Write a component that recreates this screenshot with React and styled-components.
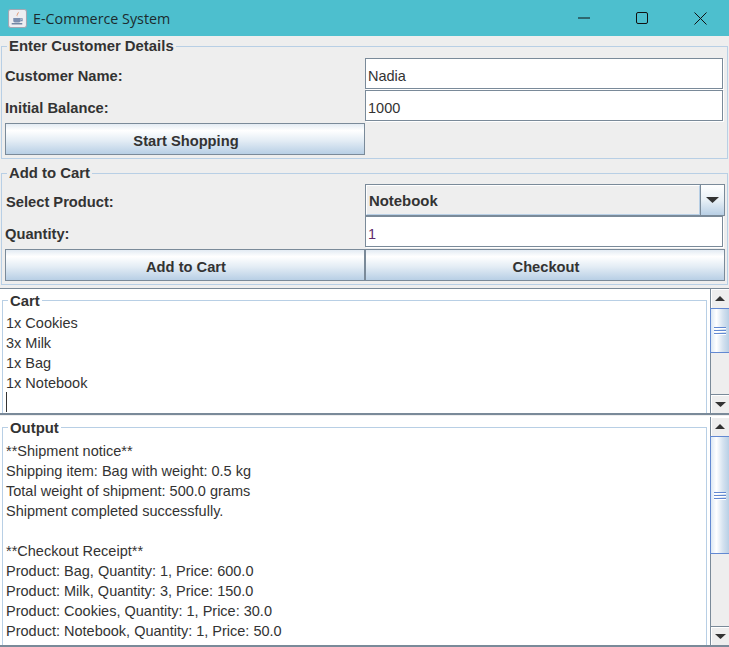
import React from "react";
import styled, { createGlobalStyle } from "styled-components";

const GlobalStyle = createGlobalStyle`
  html, body {
    margin: 0;
    padding: 0;
    height: 647px;
    overflow: hidden;
    background: #eeeeee;
  }
`;

const cartLines = ["1x Cookies", "3x Milk", "1x Bag", "1x Notebook"];

const outputLines = [
  "**Shipment notice**",
  "Shipping item: Bag with weight: 0.5 kg",
  "Total weight of shipment: 500.0 grams",
  "Shipment completed successfully.",
  "",
  "**Checkout Receipt**",
  "Product: Bag, Quantity: 1, Price: 600.0",
  "Product: Milk, Quantity: 3, Price: 150.0",
  "Product: Cookies, Quantity: 1, Price: 30.0",
  "Product: Notebook, Quantity: 1, Price: 50.0",
];

const JavaIcon = () => (
  <svg width="19" height="19" viewBox="0 0 18 18">
    <rect x="0.5" y="0.5" width="17" height="17" rx="2" fill="#eeeef2" stroke="#a3a7b3" />
    <path d="M9.500 2.500c1.500 1.600-1.600 2.600-.6 4.600-1.800-1.600.9-2.700.6-4.600z" fill="#d8682a" />
    <path d="M5 8.500h7v2.600c0 1-.8 1.600-1.600 1.600H6.600c-.9 0-1.600-.6-1.600-1.600z" fill="#7b8fb0" />
    <path d="M12 9.300h1.400v1.700H12" fill="none" stroke="#7b8fb0" />
    <path d="M3.500 14h10" stroke="#5f7597" strokeWidth="1.200" />
  </svg>
);

const Triangle = ({ up, width = 13, height = 6 }) => (
  <svg width={width} height={height} viewBox={`0 0 ${width} ${height}`}>
    <path
      d={up ? `M${width / 2} 0L${width} ${height}H0z` : `M0 0H${width}L${width / 2} ${height}z`}
      fill="#333333"
    />
  </svg>
);

const ScrollBar = ({ thumbHeight }) => (
  <Track>
    <ArrowButton>
      <Triangle up width={10} height={5} />
    </ArrowButton>
    <Thumb $height={thumbHeight}>
      <Grip />
      <Grip />
      <Grip />
    </Thumb>
    <TrackSpace />
    <ArrowButton $bottom>
      <Triangle width={11} height={5} />
    </ArrowButton>
  </Track>
);

export default function App() {
  return (
    <>
      <GlobalStyle />
      <Window>
        <TitleBar>
          <JavaIcon />
          <TitleText>E-Commerce System</TitleText>
          <WindowButtons>
            <WindowButton>
              <svg width="12" height="2" viewBox="0 0 12 2"><path d="M0 1h12" stroke="#111" strokeWidth="1" /></svg>
            </WindowButton>
            <WindowButton>
              <svg width="12" height="12" viewBox="0 0 12 12"><rect x="0.500" y="0.500" width="11" height="11" rx="1.500" fill="none" stroke="#111" /></svg>
            </WindowButton>
            <WindowButton>
              <svg width="13" height="13" viewBox="0 0 13 13"><path d="M0.500 0.500l12 12M12.500 0.500l-12 12" stroke="#111" /></svg>
            </WindowButton>
          </WindowButtons>
        </TitleBar>

        <Panel $height={122} $top={1} $pad={3}>
          <PanelTitle>Enter Customer Details</PanelTitle>
          <FormGrid>
            <Label>Customer Name:</Label>
            <TextField defaultValue="Nadia" />
            <Label>Initial Balance:</Label>
            <TextField defaultValue="1000" />
            <ActionButton>Start Shopping</ActionButton>
          </FormGrid>
        </Panel>

        <Panel $height={121} $top={5} $pad={2}>
          <PanelTitle>Add to Cart</PanelTitle>
          <FormGrid>
            <Label $indent={1}>Select Product:</Label>
            <Combo>
              <ComboValue>Notebook</ComboValue>
              <ComboArrow>
                <Triangle />
              </ComboArrow>
            </Combo>
            <Label>Quantity:</Label>
            <TextField defaultValue="1" $purple />
            <ActionButton>Add to Cart</ActionButton>
            <ActionButton>Checkout</ActionButton>
          </FormGrid>
        </Panel>

        <ScrollPane $height={127} $top={3}>
          <Viewport $top={2}>
            <TextBox $pad={4}>
              <BoxTitle>Cart</BoxTitle>
              {cartLines.map((line) => (
                <TextLine key={line}>{line}</TextLine>
              ))}
              <Caret />
            </TextBox>
          </Viewport>
          <ScrollBar thumbHeight={45} />
        </ScrollPane>

        <ScrollPane $height={231} $top={1} $open>
          <Viewport $top={1}>
            <TextBox $pad={5}>
              <BoxTitle>Output</BoxTitle>
              {outputLines.map((line, i) => (
                <TextLine key={i}>{line}</TextLine>
              ))}
            </TextBox>
          </Viewport>
          <ScrollBar thumbHeight={118} />
        </ScrollPane>
      </Window>
    </>
  );
}

const Window = styled.div`
  width: 729px;
  height: 647px;
  overflow: hidden;
  background: #eeeeee;
  font-family: "Liberation Sans", Arial, sans-serif;
  color: #333333;
`;

const TitleBar = styled.div`
  height: 36px;
  background: #4dbfce;
  display: flex;
  align-items: center;
  padding-left: 8px;
`;

const TitleText = styled.span`
  margin-left: 6px;
  font-family: "Open Sans", "Noto Sans", sans-serif;
  font-size: 14.3px;
  color: #1c2b2e;
`;

const WindowButtons = styled.div`
  margin-left: auto;
  display: flex;
`;

const WindowButton = styled.div`
  width: 58px;
  height: 36px;
  display: flex;
  align-items: center;
  justify-content: center;
`;

const Panel = styled.fieldset`
  box-sizing: border-box;
  height: ${(p) => p.$height}px;
  margin: ${(p) => p.$top}px 1px 0;
  padding: ${(p) => p.$pad}px 3px 0;
  border: 1px solid #b8cfe5;
  min-width: 0;
`;

const PanelTitle = styled.legend`
  margin-left: 2px;
  padding: 0 2px;
  font-size: 14.9px;
  font-weight: bold;
  line-height: 18px;
  color: #333333;
`;

const FormGrid = styled.div`
  display: grid;
  grid-template-columns: 360px 360px;
  grid-template-rows: 32px 33px 32px;
`;

const Label = styled.div`
  padding-left: ${(p) => p.$indent || 0}px;
  font-size: 14.7px;
  font-weight: bold;
  line-height: 37px;
`;

const TextField = styled.input`
  box-sizing: border-box;
  width: 358px;
  height: 31px;
  margin: 0;
  padding: 5px 2px 0;
  background: #ffffff;
  border: 1px solid #7a8a99;
  box-shadow: 1px 1px 0 #ffffff;
  outline: none;
  font-family: "Liberation Sans", Arial, sans-serif;
  font-size: 14.5px;
  color: ${(p) => (p.$purple ? "#5e2a6b" : "#333333")};
`;

const ActionButton = styled.button`
  box-sizing: border-box;
  width: 360px;
  height: 32px;
  padding: 3px 0 0 2px;
  border: 1px solid #7a8a99;
  background: linear-gradient(#e3ebf3 0%, #ffffff 22%, #e4edf5 55%, #b8cfe5 100%);
  font-family: "Liberation Sans", Arial, sans-serif;
  font-size: 14.7px;
  font-weight: bold;
  color: #333333;
`;

const Combo = styled.div`
  box-sizing: border-box;
  width: 360px;
  height: 32px;
  display: flex;
  border: 1px solid #7a8a99;
`;

const ComboValue = styled.div`
  flex: 1;
  border: 1px solid #b8cfe5;
  border-left-color: #ffffff;
  border-top-color: #ffffff;
  padding-left: 2px;
  font-size: 14.9px;
  font-weight: bold;
  line-height: 30px;
`;

const ComboArrow = styled.div`
  width: 23px;
  border-left: 1px solid #7a8a99;
  display: flex;
  align-items: center;
  justify-content: center;
  background: linear-gradient(#ffffff 0%, #e8f0f6 50%, #b8cfe5 100%);
`;

const ScrollPane = styled.div`
  box-sizing: border-box;
  height: ${(p) => p.$height}px;
  margin-top: ${(p) => p.$top}px;
  display: flex;
  border-top: 1px solid ${(p) => (p.$open ? "#ffffff" : "#7a8a99")};
  border-bottom: 2px solid #7a8a99;
  background: #ffffff;
`;

const Viewport = styled.div`
  flex: 1;
  min-width: 0;
  padding: ${(p) => p.$top}px 3px 0 2px;
  overflow: hidden;
  background: #ffffff;
`;

const TextBox = styled.fieldset`
  box-sizing: border-box;
  height: 100%;
  margin: 0;
  padding: ${(p) => p.$pad}px 0 0 3px;
  border: 1px solid #b8cfe5;
  border-bottom: 0;
  min-width: 0;
`;

const BoxTitle = styled.legend`
  margin-left: 2px;
  padding: 0 2px;
  font-size: 14.9px;
  font-weight: bold;
  line-height: 18px;
  color: #333333;
  transform: translateY(1px);
`;

const TextLine = styled.div`
  height: 20px;
  font-size: 14.5px;
  line-height: 20px;
  color: #333333;
`;

const Caret = styled.div`
  width: 1px;
  height: 20px;
  margin-top: -1px;
  background: #333333;
`;

const Track = styled.div`
  box-sizing: border-box;
  width: 19px;
  flex: none;
  display: flex;
  flex-direction: column;
  border-left: 1px solid #7a8a99;
  background: #eeeeee;
`;

const ArrowButton = styled.div`
  box-sizing: border-box;
  height: 19px;
  flex: none;
  display: flex;
  align-items: center;
  justify-content: center;
  background: #eeeeee;
  border-top: ${(p) => (p.$bottom ? "1px solid #7a8a99" : "0")};
  box-shadow: inset 1px 1px 0 #ffffff;
`;

const Thumb = styled.div`
  box-sizing: border-box;
  height: ${(p) => p.$height}px;
  flex: none;
  display: flex;
  flex-direction: column;
  align-items: center;
  justify-content: center;
  gap: 2px;
  margin-left: -1px;
  border: 1px solid #6289d2;
  border-right: 0;
  background: linear-gradient(90deg, #dce8f4 0%, #ffffff 30%, #d6e3f0 65%, #b8cfe5 100%);
`;

const Grip = styled.div`
  width: 12px;
  height: 1px;
  background: #6289d2;
  box-shadow: 0 1px 0 #ffffff;
`;

const TrackSpace = styled.div`
  flex: 1;
`;
